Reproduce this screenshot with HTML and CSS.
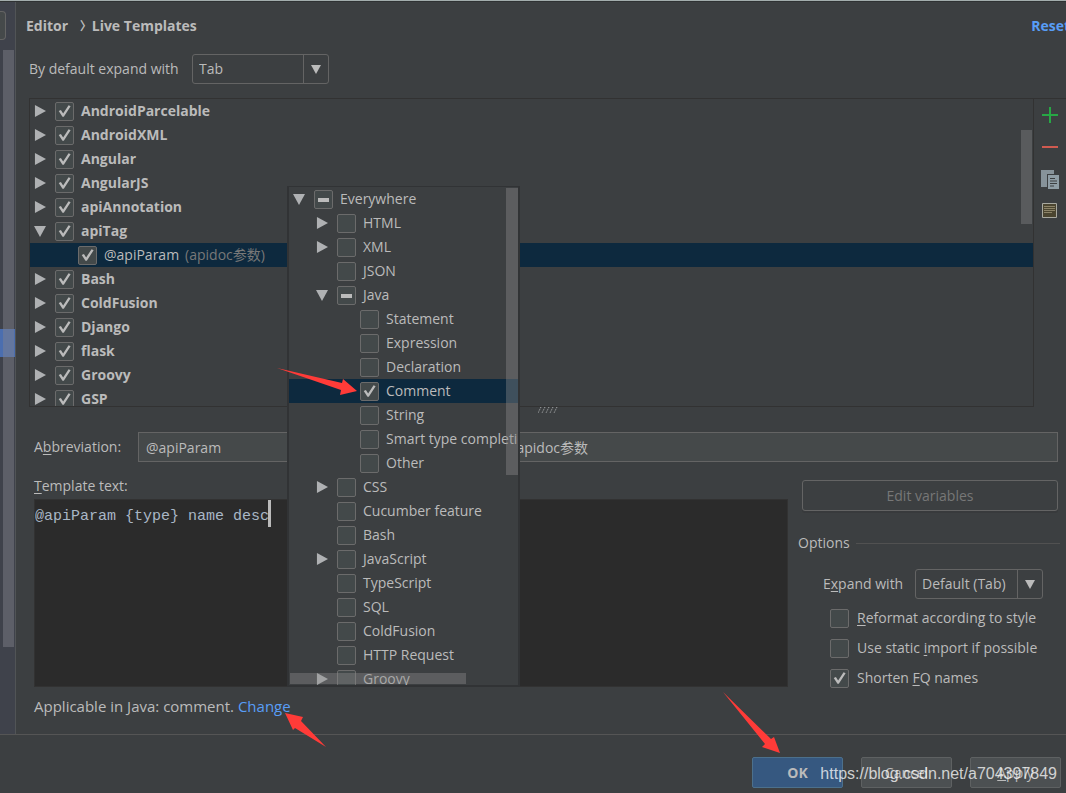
FILE: index.html
```
<!DOCTYPE html>
<html lang="en">
<head>
	<meta charset="UTF-8">
	<meta name="viewport" content="width=device-width, initial-scale=1.0">
	<title>Settings</title>
	<link rel="stylesheet" href="styles.css">
</head>
<body>
	<div class="main">
		<div class="sidebar">
			<div class="search"></div>
			<div class="side_row"></div>
			<div class="side_scroll"></div>
		</div>
		<div class="content">
			<div class="header">
				<h1>Editor <span class="sep">〉</span>Live Templates</h1>
				<a href="#">Reset</a>
			</div>
			<div class="expand_row">
				<label for="default_expand">By default expand with</label>
				<div class="combo combo_wide">
					<select id="default_expand"><option>Tab</option></select>
				</div>
			</div>

			<div class="templates">
				<div class="tree_box">
					<ul class="tree">
						<li><i class="closed"></i><label><input type="checkbox" checked>AndroidParcelable</label></li>
						<li><i class="closed"></i><label><input type="checkbox" checked>AndroidXML</label></li>
						<li><i class="closed"></i><label><input type="checkbox" checked>Angular</label></li>
						<li><i class="closed"></i><label><input type="checkbox" checked>AngularJS</label></li>
						<li><i class="closed"></i><label><input type="checkbox" checked>apiAnnotation</label></li>
						<li><i class="open"></i><label><input type="checkbox" checked>apiTag</label></li>
						<li class="level1 selected"><i></i><label><input type="checkbox" checked>@apiParam <span class="gray">(apidoc参数)</span></label></li>
						<li><i class="closed"></i><label><input type="checkbox" checked>Bash</label></li>
						<li><i class="closed"></i><label><input type="checkbox" checked>ColdFusion</label></li>
						<li><i class="closed"></i><label><input type="checkbox" checked>Django</label></li>
						<li><i class="closed"></i><label><input type="checkbox" checked>flask</label></li>
						<li><i class="closed"></i><label><input type="checkbox" checked>Groovy</label></li>
						<li><i class="closed"></i><label><input type="checkbox" checked>GSP</label></li>
					</ul>
					<div class="tree_scroll"></div>
				</div>
				<div class="tools">
					<button type="button" aria-label="Add">
						<svg width="18" height="18" viewBox="0 0 18 18"><path d="M9 1v16M1 9h16" stroke="#27a745" stroke-width="2"/></svg>
					</button>
					<button type="button" aria-label="Remove">
						<svg width="18" height="18" viewBox="0 0 18 18"><path d="M1 9h16" stroke="#d05a50" stroke-width="2"/></svg>
					</button>
					<button type="button" aria-label="Copy">
						<svg width="18" height="19" viewBox="0 0 18 19">
							<path d="M0 0h13v4H6v13H0z" fill="#87939a"/>
							<path d="M7 5h11v14H7z" fill="#8f9da5"/>
							<path d="M9 8.500h5M9 11h7M9 13.500h7M9 16h4" stroke="#3c3f41"/>
						</svg>
					</button>
					<button type="button" aria-label="Restore">
						<svg width="18" height="18" viewBox="0 0 18 18">
							<path d="M1.500 1.500h14v14h-14z" fill="#4b4530" stroke="#a9a9a0"/>
							<path d="M3 4.500h11M3 6.500h11M3 8.500h11M3 10.500h8" stroke="#8d8468"/>
						</svg>
					</button>
				</div>
			</div>
			<div class="splitter">
				<svg width="20" height="6" viewBox="0 0 20 6"><path d="M3 0L0 6M7 0L4 6M11 0L8 6M15 0L12 6M19 0L16 6" stroke="#b4b6b7" stroke-dasharray="1 1"/></svg>
			</div>

			<div class="names">
				<label for="abbr" class="abbr_label">A<u>b</u>breviation:</label>
				<input type="text" id="abbr" class="abbr" value="@apiParam">
				<label for="desc" class="desc_label">Description:</label>
				<input type="text" id="desc" class="desc" value="apidoc参数">
			</div>

			<div class="bottom">
				<div class="text_part">
					<label for="template"><u>T</u>emplate text:</label>
					<div class="editor">
						<textarea id="template" spellcheck="false">@apiParam {type} name desc</textarea>
						<span class="caret"></span>
					</div>
					<p class="applicable">Applicable in Java: comment. <a href="#">Change</a></p>
				</div>
				<div class="options">
					<button type="button" class="edit_btn" disabled>Edit variables</button>
					<h2>Options</h2>
					<div class="option_expand">
						<label for="expand">E<u>x</u>pand with</label>
						<div class="combo">
							<select id="expand"><option>Default (Tab)</option></select>
						</div>
					</div>
					<label class="option"><input type="checkbox"><span><u>R</u>eformat according to style</span></label>
					<label class="option"><input type="checkbox"><span>Use static <u>i</u>mport if possible</span></label>
					<label class="option"><input type="checkbox" checked><span>Shorten <u>F</u>Q names</span></label>
				</div>
			</div>
		</div>
	</div>

	<div class="footer">
		<button type="button" class="ok">OK</button>
		<button type="button">Cancel</button>
		<button type="button"><u>A</u>pply</button>
		<div class="watermark">https://blog.csdn.net/a704397849</div>
	</div>

	<!-- context popup -->
	<div class="popup">
		<ul class="tree">
			<li><i class="open"></i><label><input type="checkbox" class="mixed">Everywhere</label></li>
			<li class="level1"><i class="closed"></i><label><input type="checkbox">HTML</label></li>
			<li class="level1"><i class="closed"></i><label><input type="checkbox">XML</label></li>
			<li class="level1"><i></i><label><input type="checkbox">JSON</label></li>
			<li class="level1"><i class="open"></i><label><input type="checkbox" class="mixed">Java</label></li>
			<li class="level2"><i></i><label><input type="checkbox">Statement</label></li>
			<li class="level2"><i></i><label><input type="checkbox">Expression</label></li>
			<li class="level2"><i></i><label><input type="checkbox">Declaration</label></li>
			<li class="level2 selected"><i></i><label><input type="checkbox" checked>Comment</label></li>
			<li class="level2"><i></i><label><input type="checkbox">String</label></li>
			<li class="level2"><i></i><label><input type="checkbox">Smart type completion</label></li>
			<li class="level2"><i></i><label><input type="checkbox">Other</label></li>
			<li class="level1"><i class="closed"></i><label><input type="checkbox">CSS</label></li>
			<li class="level1"><i></i><label><input type="checkbox">Cucumber feature</label></li>
			<li class="level1"><i></i><label><input type="checkbox">Bash</label></li>
			<li class="level1"><i class="closed"></i><label><input type="checkbox">JavaScript</label></li>
			<li class="level1"><i></i><label><input type="checkbox">TypeScript</label></li>
			<li class="level1"><i></i><label><input type="checkbox">SQL</label></li>
			<li class="level1"><i></i><label><input type="checkbox">ColdFusion</label></li>
			<li class="level1"><i></i><label><input type="checkbox">HTTP Request</label></li>
			<li class="level1"><i class="closed"></i><label><input type="checkbox">Groovy</label></li>
		</ul>
		<div class="popup_vscroll"></div>
		<div class="popup_hscroll"></div>
	</div>

	<!-- red arrows -->
	<svg class="arrow arrow_comment" width="82" height="30" viewBox="0 0 82 30"><path d="M0 0L65 15L66 11L80 23L63 27L64 22Z" fill="#ff3b38"/></svg>
	<svg class="arrow arrow_change" width="42" height="36" viewBox="0 0 42 36"><path d="M0 0L18 4L16 8L41 34L10 15L8 17Z" fill="#ff3b38"/></svg>
	<svg class="arrow arrow_ok" width="58" height="62" viewBox="0 0 58 62"><path d="M0 0L48 47L51 45L57 61L39 55L42 52Z" fill="#ff3b38"/></svg>
</body>
</html>
```
FILE: styles.css
```
*{
	padding: 0;
	margin: 0;
	box-sizing: border-box;
}
body{
	position: relative;
	display: flex;
	flex-direction: column;
	min-height: 100vh;
	overflow: hidden;
	padding-top: 1px;
	border-top: 1px solid #a3adad;
	box-shadow: inset 0 1px #2f3233;
	background: #3c3f41;
	color: #bbb;
	font-family: "Open Sans", "Noto Sans CJK SC", sans-serif;
	font-size: 14px;
	line-height: 20px;
}
button,input,select,textarea{
	font: inherit;
	color: inherit;
}
a{
	color: #589df6;
	text-decoration: none;
}
ul{
	list-style: none;
}
u{
	text-underline-offset: 2px;
}
.main{
	display: flex;
	flex: 1;
}

/* left strip */
.sidebar{
	position: relative;
	width: 16px;
	flex: none;
	background: #3f424b;
	border-right: 1px solid #515456;
}
.search{
	width: 6px;
	height: 29px;
	margin-top: 9px;
	border: 1px solid #646464;
	border-left: 0;
	border-radius: 0 4px 4px 0;
	background: #45494a;
}
.side_row{
	position: absolute;
	top: 327px;
	left: 0;
	width: 15px;
	height: 28px;
	background: #4b6eaf;
}
.side_scroll{
	position: absolute;
	top: 48px;
	left: 3px;
	width: 11px;
	height: 597px;
	background: rgba(130,130,140,.45);
}

.content{
	flex: 1;
	min-width: 0;
}
.header{
	display: flex;
	justify-content: space-between;
	padding: 14px 0 0 10px;
	margin-right: -4px;
	font-weight: bold;
}
.header h1{
	font-size: 14px;
}
.sep{
	display: inline-block;
	width: 20px;
	font-size: 12px;
	text-align: right;
}
.expand_row{
	display: flex;
	align-items: center;
	gap: 8px;
	padding: 17px 0 14px 13px;
}
.expand_row label{
	width: 155px;
}
.combo{
	position: relative;
	height: 30px;
	border: 1px solid #646464;
	border-radius: 3px;
}
.combo select{
	appearance: none;
	width: 100%;
	height: 28px;
	padding: 0 30px 0 6px;
	border: 0;
	background: none;
}
.combo::before{
	content: "";
	position: absolute;
	top: 0;
	right: 24px;
	height: 28px;
	border-left: 1px solid #646464;
}
.combo::after{
	content: "";
	position: absolute;
	top: 10px;
	right: 7px;
	border: 5px solid transparent;
	border-top: 9px solid #bbb;
	border-bottom: 0;
	pointer-events: none;
}
.combo_wide{
	width: 137px;
}

/* trees */
.templates{
	display: flex;
	height: 309px;
	border-top: 1px solid #323232;
	margin-left: 13px;
}
.tree_box{
	position: relative;
	flex: 1;
	overflow: hidden;
	border: 1px solid #323232;
	border-top: 0;
}
.tree_box li{
	font-weight: bold;
}
.tree_box .level1{
	font-weight: normal;
}
.tree li{
	display: flex;
	align-items: center;
	height: 24px;
	padding-left: 4px;
	white-space: nowrap;
}
.tree .level1{
	padding-left: 27px;
}
.tree .level2{
	padding-left: 50px;
}
.tree .selected{
	background: #0d293e;
}
.tree label{
	display: flex;
	flex: none;
	align-items: center;
}
.tree input{
	margin-right: 7px;
}
.tree i{
	flex: none;
	width: 12px;
	height: 12px;
	margin-right: 9px;
}
.tree .closed{
	background: #afb1b3;
	clip-path: polygon(8% 0,100% 50%,8% 100%);
}
.tree .open{
	background: #afb1b3;
	clip-path: polygon(0 8%,100% 8%,50% 100%);
}
.gray{
	margin-left: 6px;
	color: #787878;
}
.tree_scroll{
	position: absolute;
	top: 31px;
	right: 1px;
	width: 11px;
	height: 94px;
	background: #595b5d;
}
input[type=checkbox]{
	appearance: none;
	flex: none;
	width: 19px;
	height: 19px;
	border: 1px solid #6b6b6b;
	border-radius: 2px;
	background: #43494a;
}
input[type=checkbox]:checked::before{
	content: "";
	display: block;
	width: 17px;
	height: 17px;
	background: #bbb;
	clip-path: polygon(16% 50%,29% 44%,42% 64%,74% 16%,86% 22%,46% 84%,38% 84%);
}
.mixed::before{
	content: "";
	display: block;
	width: 11px;
	height: 4px;
	margin: 7px 3px;
	background: #bbb;
}

.tools{
	display: flex;
	flex-direction: column;
	gap: 12px;
	width: 32px;
	padding-top: 6px;
	align-items: center;
}
.tools button{
	width: 18px;
	height: 20px;
	border: 0;
	background: none;
}
.tools svg{
	display: block;
}
.splitter{
	height: 25px;
	padding-left: 522px;
}
.splitter svg{
	display: block;
}

/* abbreviation and description */
.names{
	display: flex;
	align-items: center;
	padding: 0 8px 0 18px;
}
.names input{
	height: 30px;
	padding: 0 7px;
	border: 1px solid #646464;
	background: #45494a;
}
.abbr_label{
	width: 91px;
}
.names .abbr{
	width: 262px;
	margin-left: 13px;
}
.desc_label{
	margin-left: 12px;
}
.names .desc{
	flex: 1;
	margin-left: 18px;
}

.bottom{
	display: flex;
	padding: 14px 6px 17px 18px;
}
.text_part{
	flex: 1;
	margin-right: 10px;
}
.text_part label{
	display: block;
}
.editor{
	position: relative;
	height: 188px;
	margin-top: 3px;
	border: 1px solid #323232;
	background: #2b2b2b;
}
.editor textarea{
	display: block;
	width: 100%;
	height: 186px;
	padding-top: 7px;
	border: 0;
	outline: 0;
	resize: none;
	background: none;
	color: #a9b7c6;
	font-family: "Liberation Mono", monospace;
	font-size: 15px;
}
.caret{
	position: absolute;
	top: 0;
	left: 233px;
	width: 3px;
	height: 27px;
	background: #bbb;
}
.applicable{
	margin-top: 9px;
	font-size: 15px;
}
.options{
	width: 262px;
	flex: none;
	padding-top: 4px;
}
.edit_btn{
	display: block;
	width: 256px;
	height: 31px;
	margin-left: 4px;
	border: 1px solid #646464;
	border-radius: 3px;
	background: none;
	color: #777;
	box-shadow: 0 2px #383a3c;
}
.options h2{
	display: flex;
	align-items: center;
	gap: 6px;
	margin-top: 22px;
	font-size: 14px;
	font-weight: normal;
}
.options h2::after{
	content: "";
	flex: 1;
	border-top: 1px solid #515151;
}
.option_expand{
	display: flex;
	align-items: center;
	justify-content: space-between;
	margin: 16px 17px 4px 25px;
}
.option_expand .combo{
	width: 128px;
}
.option{
	display: flex;
	align-items: center;
	gap: 8px;
	height: 30px;
	padding-left: 32px;
	white-space: nowrap;
}

.footer{
	position: relative;
	display: flex;
	justify-content: flex-end;
	gap: 18px;
	padding: 22px 5px 5px;
	border-top: 1px solid #555;
}
.footer button{
	width: 91px;
	height: 31px;
	border: 1px solid #5e6162;
	border-radius: 2px;
	background: #4c5052;
}
.footer .ok{
	border-color: #4c708c;
	background: #365880;
	font-weight: bold;
}
.watermark{
	position: absolute;
	right: 9px;
	bottom: 9px;
	color: rgba(255,255,255,.75);
	font-family: "Liberation Sans", sans-serif;
	font-size: 16px;
}

.popup{
	position: absolute;
	top: 185px;
	left: 287px;
	width: 233px;
	height: 501px;
	overflow: hidden;
	border: 1px solid #313335;
	border-width: 1px 2px 2px 2px;
	background: #3c3f41;
}
.popup_vscroll{
	position: absolute;
	top: 1px;
	right: 0;
	width: 12px;
	height: 287px;
	background: rgba(140,140,140,.4);
}
.popup_hscroll{
	position: absolute;
	bottom: 1px;
	left: 1px;
	width: 176px;
	height: 11px;
	background: rgba(140,140,140,.4);
}

.arrow{
	position: absolute;
	pointer-events: none;
}
.arrow_comment{
	top: 367px;
	left: 277px;
}
.arrow_change{
	top: 712px;
	left: 285px;
}
.arrow_ok{
	top: 691px;
	left: 723px;
}
```
